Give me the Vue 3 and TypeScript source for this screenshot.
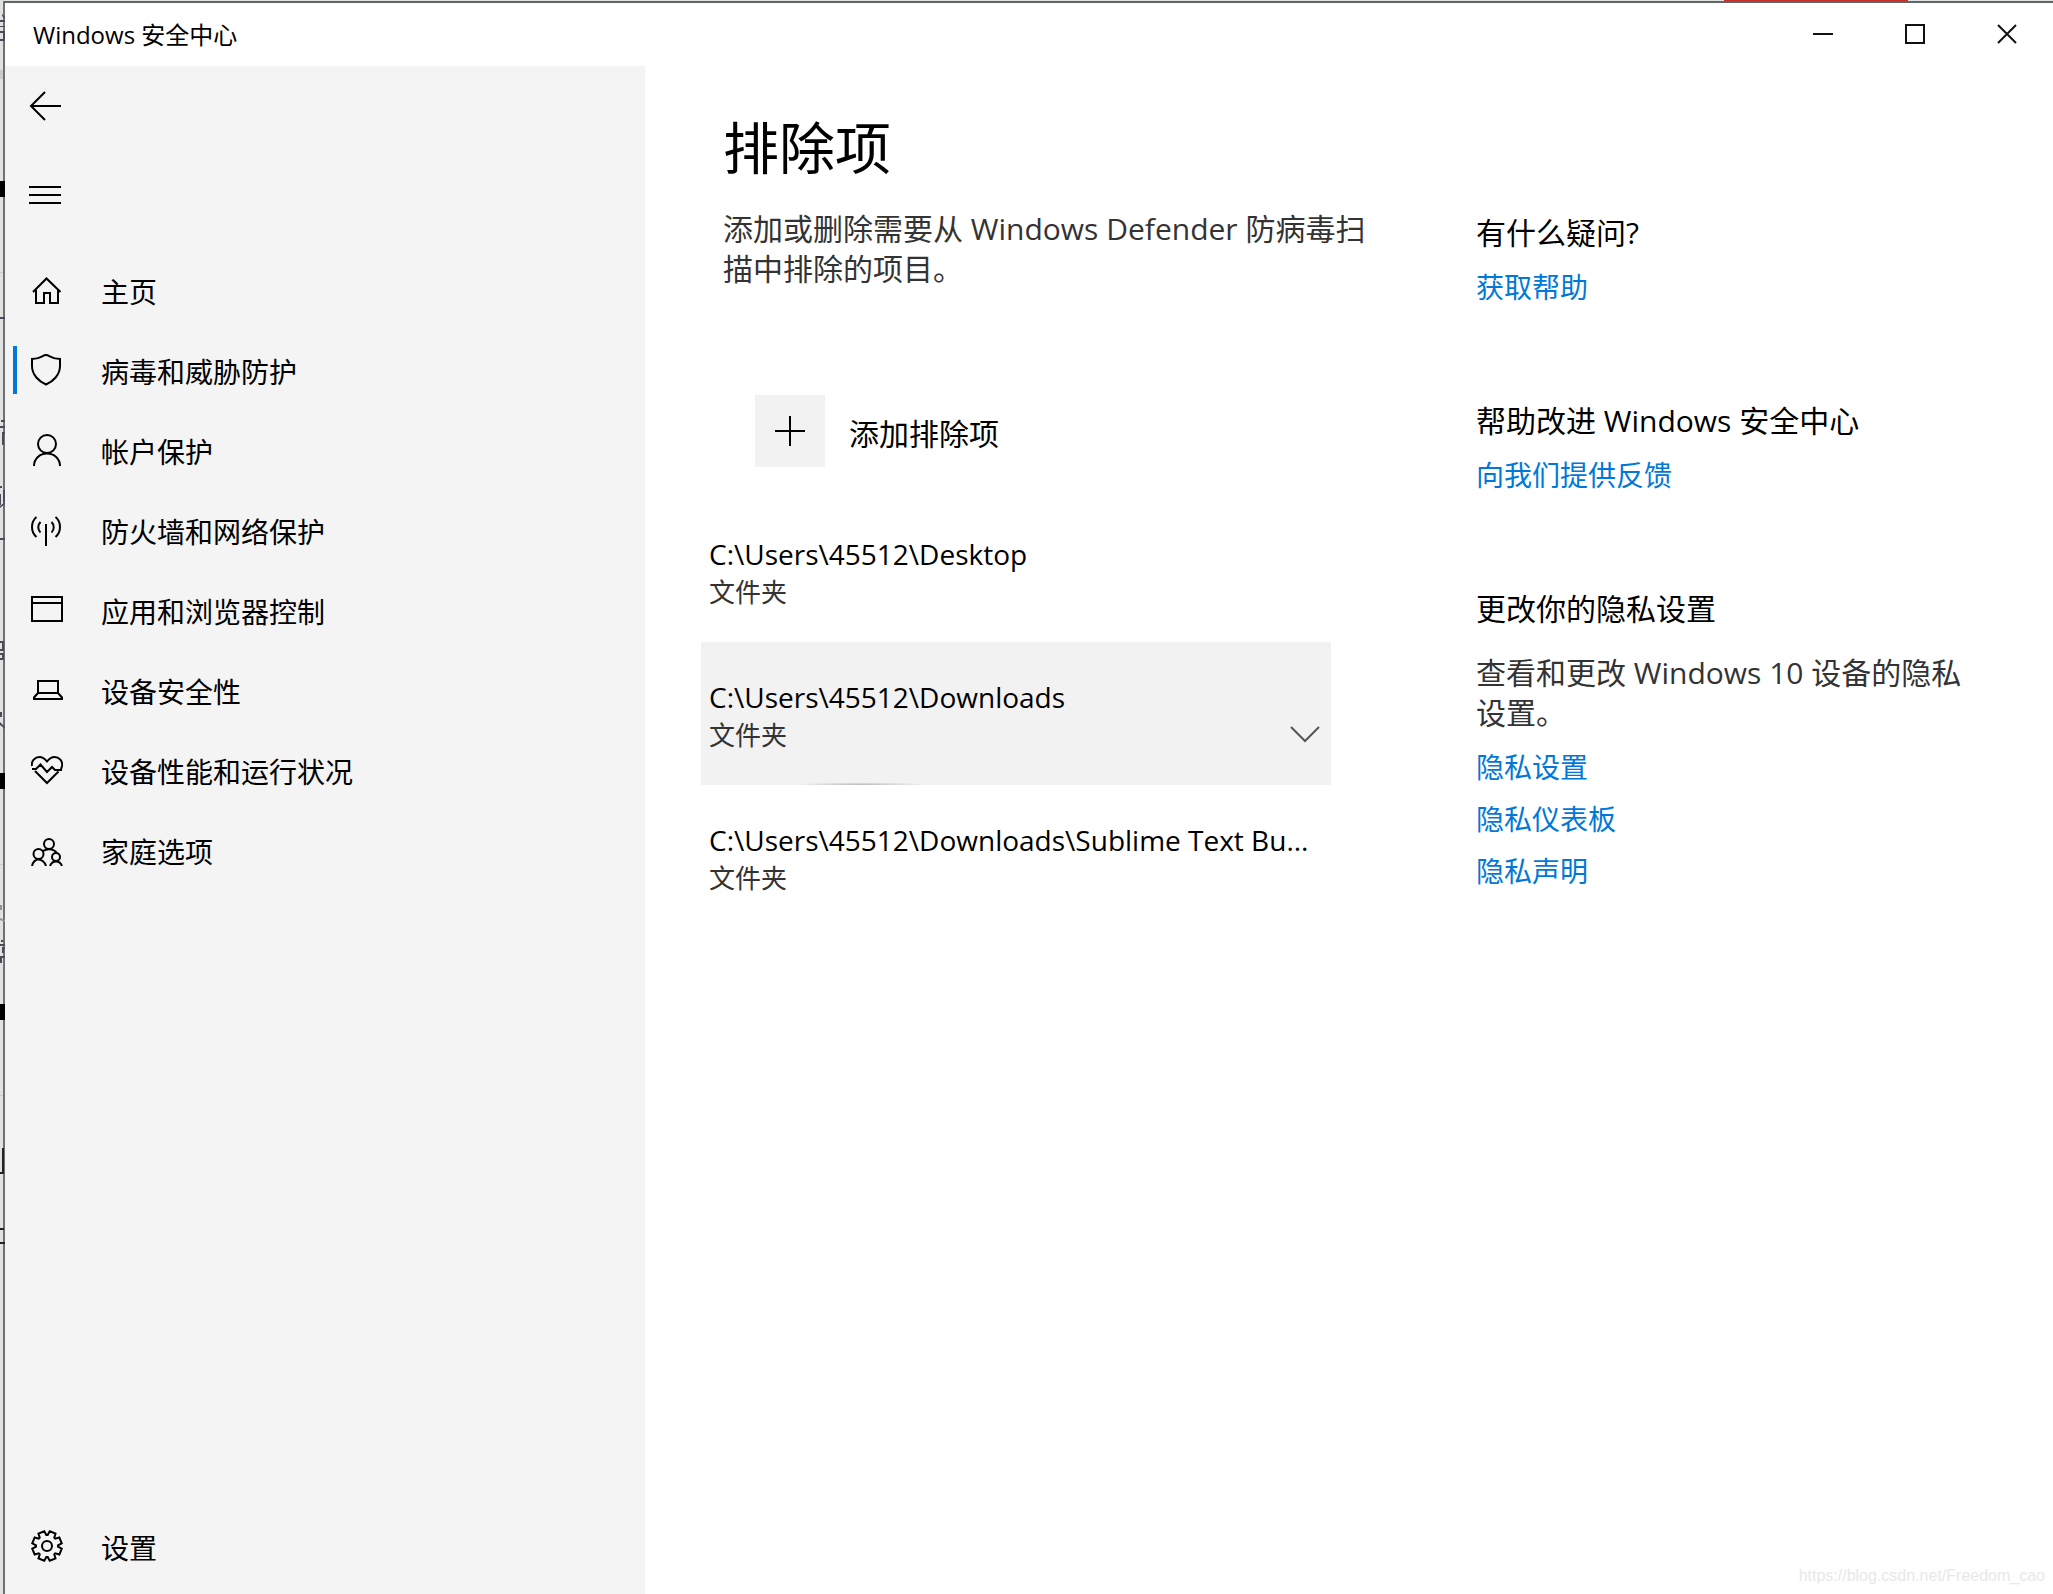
<script setup lang="ts">
import { ref } from 'vue'

interface NavItem {
  id: string
  label: string
  paths: string[]
}

interface Exclusion {
  path: string
  kind: string
}

interface HelpSection {
  title: string
  text?: string
  links: string[]
}

const navItems: NavItem[] = [
  { id: 'home', label: '主页', paths: ['M2 18 15.5 4.5 29.5 18', 'M5 16V29H13V19H19V29H27V16'] },
  {
    id: 'virus',
    label: '病毒和威胁防护',
    paths: ['M15 1C11.5 1 10 4.8 1 5V12C1 21 8 27.500 15 30.500C22 27.500 29 21 29 12V5C20 4.800 18.500 1 15 1Z'],
  },
  {
    id: 'account',
    label: '帐户保护',
    paths: ['M16 1A9 9 0 1 1 16 19A9 9 0 1 1 16 1Z', 'M3 32C3 24.500 9 19.500 16 19.500S29 24.500 29 32'],
  },
  {
    id: 'firewall',
    label: '防火墙和网络保护',
    paths: [
      'M15 10V32',
      'M5.500 3C-.5 8-.5 18 5.500 23',
      'M9.500 8C6.500 11 6.500 15.500 9.500 18.500',
      'M20.500 8C23.500 11 23.500 15.500 20.500 18.500',
      'M24.500 3C30.500 8 30.500 18 24.500 23',
    ],
  },
  { id: 'browser', label: '应用和浏览器控制', paths: ['M1 3H31V27H1Z', 'M1 9H31'] },
  { id: 'device', label: '设备安全性', paths: ['M7 7H27V19H7Z', 'M7 19 3 23.500V25H31V23.500L27 19'] },
  {
    id: 'health',
    label: '设备性能和运行状况',
    paths: [
      'M1 12C0 7 4 3 8.500 3C12 3 14 5 16 7.500C18 5 20 3 23.500 3C28 3 32 7 31 12L30 15.500',
      'M1 15H5L9.500 10.500L16 18L21 13L24 16H31',
      'M4 17 16 29 27.500 17.500',
    ],
  },
  {
    id: 'family',
    label: '家庭选项',
    paths: [
      'M18 5A5 5 0 1 1 18 15A5 5 0 1 1 18 5Z',
      'M7.500 15A5 5 0 1 1 7.500 25A5 5 0 1 1 7.500 15Z',
      'M25 19A4 4 0 1 1 25 27A4 4 0 1 1 25 19Z',
      'M1 32C2 28 4.500 25.500 7.500 25.500S14 28 15 32',
      'M19 32C20 29 22 27.500 25 27.500S30 29 31 32',
      'M12 17C16 14.500 23 14.500 26 19',
    ],
  },
]

function gearOutline(teeth: number, centre: number): string {
  const step = 360 / teeth
  const points: string[] = []
  const add = (radius: number, degrees: number) => {
    const a = (degrees * Math.PI) / 180
    points.push(`${(centre + radius * Math.sin(a)).toFixed(2)} ${(centre - radius * Math.cos(a)).toFixed(2)}`)
  }
  for (let i = 0; i < teeth; i++) {
    const mid = step / 2 + step * i
    add(15, mid - 12)
    add(15, mid + 12)
    add(11, mid + 19)
    add(11, mid + 26)
  }
  return `M${points.join('L')}Z`
}

const gear = gearOutline(8, 16)

const exclusions: Exclusion[] = [
  { path: 'C:\\Users\\45512\\Desktop', kind: '文件夹' },
  { path: 'C:\\Users\\45512\\Downloads', kind: '文件夹' },
  { path: 'C:\\Users\\45512\\Downloads\\Sublime Text Bu...', kind: '文件夹' },
]

const helpSections: HelpSection[] = [
  { title: '有什么疑问?', links: ['获取帮助'] },
  { title: '帮助改进 Windows 安全中心', links: ['向我们提供反馈'] },
  {
    title: '更改你的隐私设置',
    text: '查看和更改 Windows 10 设备的隐私设置。',
    links: ['隐私设置', '隐私仪表板', '隐私声明'],
  },
]

const current = ref('virus')
const hovered = ref(1)
</script>

<template>
  <div class="desktop">
    <div class="accent-tab"></div>
    <svg class="backdrop" width="5" height="1594" aria-hidden="true">
      <g fill="#c8cacc">
        <rect y="70" width="3" height="9" />
        <rect y="272" width="3" height="1" />
        <rect y="864" width="3" height="1" />
        <rect y="1095" width="3" height="1" />
      </g>
      <g fill="#000">
        <rect y="181" width="5" height="16" />
        <rect y="773" width="5" height="16" />
        <rect y="1004" width="5" height="16" />
      </g>
      <g fill="#4a4a58">
        <path d="M2 14 5 17V19L2 16ZM0 20H5V22H0ZM0 26H5V27H0ZM0 31H5V33H0ZM0 39H5V41H0ZM3 33H5V39H3Z" />
        <path d="M0 317H5V319H0ZM0 538H5V540H0Z" />
        <path d="M1 420H5V422H1ZM0 426H5V428H0ZM2 432H5V434H2ZM2 434H4V445H2Z" />
        <path d="M0 486H2V488H0ZM0 494H1V505H0ZM3 490H5V502H3ZM0 506 5 502V504L0 508Z" />
        <path d="M0 641H4V643H0ZM2 643H4V649H2ZM0 649H4V651H0ZM0 653H4V655H0ZM2 655H4V658H2ZM0 658H4V660H0Z" />
        <path d="M0 712H2V717H0ZM0 722 5 727V729L0 725Z" />
        <path d="M1 940H3V942H1ZM0 944H5V946H0ZM2 947H5V949H2ZM2 949H4V953H2ZM0 956H5V958H0ZM0 958H2V963H0Z" />
      </g>
      <path fill="#9090a0" d="M0 905H2V910H0ZM0 918 5 920V922L0 920Z" />
      <path fill="#222" d="M2 1148H4V1174H0V1172H2ZM0 1228H4V1230H0ZM0 1242H5V1244H0Z" />
    </svg>

    <div class="window">
      <header class="titlebar">
        <span class="caption">Windows 安全中心</span>
        <div class="controls">
          <button type="button" aria-label="最小化">
            <svg width="20" height="20" viewBox="0 0 20 20"><path d="M0 10H20" /></svg>
          </button>
          <button type="button" aria-label="最大化">
            <svg width="20" height="20" viewBox="0 0 20 20"><path d="M1 1H19V19H1Z" /></svg>
          </button>
          <button type="button" aria-label="关闭">
            <svg width="20" height="20" viewBox="0 0 20 20"><path d="M1 1 19 19M19 1 1 19" /></svg>
          </button>
        </div>
      </header>

      <div class="body">
        <aside class="sidebar">
          <button type="button" class="tool back" aria-label="返回">
            <svg width="32" height="32" viewBox="0 0 32 32"><path d="M2 16H32M16 2 2 16 16 30" /></svg>
          </button>
          <button type="button" class="tool menu" aria-label="导航">
            <svg width="32" height="32" viewBox="0 0 32 32"><path d="M0 8H32M0 16H32M0 24H32" /></svg>
          </button>
          <nav class="nav">
            <a
              v-for="item in navItems"
              :key="item.id"
              href="#"
              class="nav-item"
              :class="{ active: item.id === current }"
              @click.prevent="current = item.id"
            >
              <svg width="32" height="32" viewBox="0 0 32 32" aria-hidden="true">
                <path v-for="d in item.paths" :key="d" :d="d" />
              </svg>
              <span>{{ item.label }}</span>
            </a>
          </nav>
          <a href="#" class="nav-item settings">
            <svg width="32" height="32" viewBox="0 0 32 32" aria-hidden="true">
              <path :d="gear" />
              <circle cx="16" cy="16" r="5" />
            </svg>
            <span>设置</span>
          </a>
        </aside>

        <main class="content">
          <section class="primary">
            <h1>排除项</h1>
            <p class="lead">添加或删除需要从 Windows Defender 防病毒扫描中排除的项目。</p>
            <button type="button" class="add">
              <span class="tile">
                <svg width="30" height="30" viewBox="0 0 30 30"><path d="M15 0V30M0 15H30" /></svg>
              </span>
              <span class="add-label">添加排除项</span>
            </button>
            <ul class="list">
              <li v-for="(item, i) in exclusions" :key="item.path">
                <button type="button" class="row" :class="{ hover: i === hovered }" @mouseenter="hovered = i">
                  <span class="path">{{ item.path }}</span>
                  <span class="meta">
                    <span>{{ item.kind }}</span>
                    <svg v-if="i === hovered" width="30" height="18" viewBox="0 0 30 18">
                      <path d="M1 1 15 15 29 1" />
                    </svg>
                  </span>
                </button>
              </li>
            </ul>
          </section>

          <aside class="help">
            <section v-for="section in helpSections" :key="section.title">
              <h2>{{ section.title }}</h2>
              <p v-if="section.text">{{ section.text }}</p>
              <a v-for="link in section.links" :key="link" href="#">{{ link }}</a>
            </section>
          </aside>
        </main>
      </div>
      <div class="watermark">https://blog.csdn.net/Freedom_cao</div>
    </div>
  </div>
</template>

<style>
html,
body,
#app {
  height: 100%;
}
body {
  margin: 0;
}
</style>

<style scoped>
.desktop {
  position: relative;
  box-sizing: border-box;
  display: flex;
  min-height: 100%;
  padding: 1px 0 0 3px;
  background: #dfe2e1;
  color: #000;
  font-family: 'Open Sans', 'Noto Sans CJK SC', sans-serif;
  font-size: 30px;
  line-height: 40px;
  overflow: hidden;
}
.accent-tab {
  position: absolute;
  top: 0;
  right: 145px;
  width: 184px;
  height: 1px;
  background: #c4302b;
}
.backdrop {
  position: absolute;
  top: 0;
  left: 0;
  z-index: 1;
}
.window {
  position: relative;
  flex: 1;
  display: flex;
  flex-direction: column;
  border-top: 2px solid #606462;
  border-left: 2px solid #707070;
  background: #fff;
}
svg {
  display: block;
  flex: none;
  fill: none;
  stroke: #000;
  stroke-width: 2;
}
.backdrop {
  stroke: none;
}
button {
  padding: 0;
  border: 0;
  background: none;
  color: inherit;
  font: inherit;
  text-align: left;
}
a {
  text-decoration: none;
}
h1,
h2,
p,
ul {
  margin: 0;
  padding: 0;
  font-weight: 400;
}
ul {
  list-style: none;
}

.titlebar {
  display: flex;
  justify-content: space-between;
  height: 63px;
}
.caption {
  padding: 12px 0 0 28px;
  font-size: 24px;
}
.controls {
  display: flex;
  height: 62px;
}
.controls button {
  display: flex;
  align-items: center;
  justify-content: center;
  width: 92px;
}
.controls svg {
  stroke: #111;
}

.body {
  flex: 1;
  display: flex;
}
.sidebar {
  flex: 0 0 640px;
  display: flex;
  flex-direction: column;
  align-items: stretch;
  background: #f4f4f4;
}
.tool {
  display: flex;
  align-items: center;
  height: 80px;
  padding-left: 24px;
}
.menu {
  height: 98px;
}
.nav {
  flex: 1;
  padding-top: 6px;
}
.nav-item {
  position: relative;
  display: flex;
  align-items: center;
  gap: 38px;
  height: 80px;
  padding-left: 26px;
  color: #000;
  font-size: 28px;
}
.nav-item span {
  padding-top: 4px;
}
.nav-item.active::before {
  content: '';
  position: absolute;
  top: 16px;
  left: 8px;
  width: 4px;
  height: 48px;
  background: #0078d7;
}
.settings {
  margin-bottom: 8px;
}

.content {
  flex: 1;
  display: flex;
  padding-left: 56px;
}
.primary {
  flex: 1;
  padding-top: 45px;
}
h1 {
  padding-left: 22px;
  font-size: 56px;
  line-height: 72px;
}
.lead {
  max-width: 656px;
  margin-top: 26px;
  padding-left: 22px;
  color: #333;
}
.add {
  display: flex;
  align-items: center;
  gap: 24px;
  margin: 106px 0 32px 54px;
}
.tile {
  display: flex;
  align-items: center;
  justify-content: center;
  width: 70px;
  height: 72px;
  background: #f2f2f2;
}
.add-label {
  padding-top: 6px;
}
.list {
  max-width: 630px;
}
.row {
  box-sizing: border-box;
  display: block;
  width: 100%;
  padding: 35px 11px 32px 8px;
}
.row.hover {
  background:
    radial-gradient(ellipse 64px 3px at 160px 100%, #b8b8b8, #f2f2f2) bottom / 100% 2px no-repeat,
    #f2f2f2;
}
.path {
  display: block;
  font-size: 28px;
  white-space: nowrap;
}
.meta {
  display: flex;
  align-items: center;
  justify-content: space-between;
  color: #333;
  font-size: 26px;
  line-height: 36px;
}
.meta svg {
  stroke: #555;
}

.help {
  box-sizing: border-box;
  flex: 0 0 577px;
  padding: 147px 77px 0 0;
}
.help section {
  display: flex;
  flex-direction: column;
  align-items: flex-start;
  margin-bottom: 94px;
}
h2 {
  font-size: 30px;
}
.help p {
  margin-top: 24px;
  color: #333;
}
.help a {
  margin-top: 14px;
  color: #0078d7;
  font-size: 28px;
}
.help a + a {
  margin-top: 12px;
}
.watermark {
  position: absolute;
  right: 8px;
  bottom: 6px;
  color: #e8e8e8;
  font: 16px/24px 'Liberation Sans', sans-serif;
}
</style>
